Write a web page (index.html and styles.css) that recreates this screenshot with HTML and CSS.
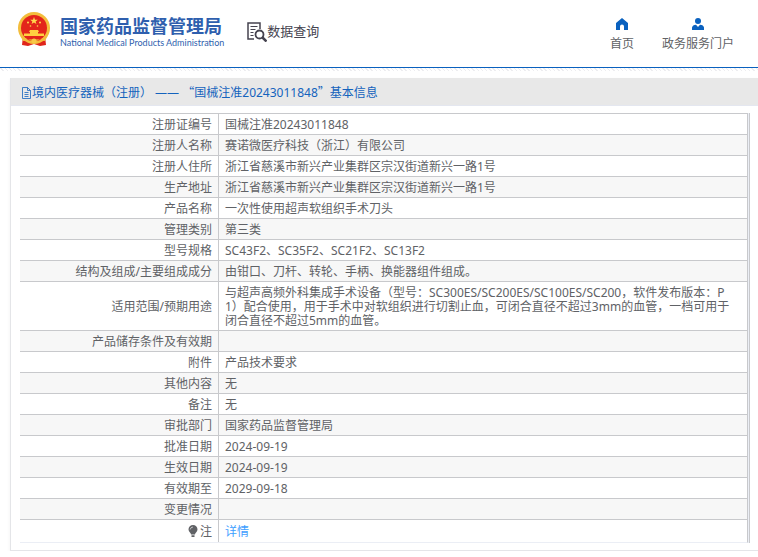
FILE: index.html
```html
<!DOCTYPE html>
<html lang="zh-CN">
<head>
<meta charset="utf-8">
<title>国家药品监督管理局 数据查询</title>
<link rel="stylesheet" href="styles.css">
</head>
<body>
<header class="top">
  <a class="brand" href="#">
    <svg class="emblem" viewBox="0 0 32 35" aria-hidden="true">
      <path d="M5 24h22l1 9-6 1-6-2-6 2-6-1z" fill="#e0251b"/>
      <circle cx="16" cy="16" r="16" fill="#f3bd3c"/>
      <circle cx="16" cy="16" r="13" fill="#e3241b"/>
      <path d="M16 5l1 2.700h2.800l-2.200 1.700.8 2.700-2.400-1.600-2.400 1.600.8-2.700-2.200-1.700H15z" fill="#ffd84d"/>
      <g fill="#ffd84d"><circle cx="10" cy="10.500" r="1"/><circle cx="22" cy="10.500" r="1"/><circle cx="12.500" cy="14" r=".8"/><circle cx="19.500" cy="14" r=".8"/></g>
      <path d="M12 18h8l1 2h-1v1.500h6v2.500H6v-2.500h6V20h-1z" fill="#ffd040"/>
      <path d="M3 25q13 5 26 0l-2 4q-6-1-7 2-4-2-8 0-1-3-7-2z" fill="#f3bd3c"/>
      <path d="M8 26.500q8 3 16 0l-3 2q-5-1-10 0z" fill="#dd2018"/>
      <circle cx="16" cy="29" r="2.500" fill="#f7c947"/>
    </svg>
    <span class="brand-text">
      <strong class="brand-cn">国家药品监督管理局</strong>
      <span class="brand-en">National Medical Products Administration</span>
    </span>
  </a>
  <a class="query" href="#">
    <svg class="query-icon" viewBox="0 0 20 20" fill="none" stroke="#45434f" aria-hidden="true">
      <path d="M7 17H1V1h12v6" stroke-width="1.500"/>
      <path d="M3.500 4.500h7M3.500 7.500h5M3.500 10.500h3M3.500 13.500h3" stroke-width="1.200"/>
      <circle cx="12.500" cy="12.500" r="4" stroke-width="1.800"/>
      <path d="M15.500 15.500l4 4" stroke-width="2.500"/>
    </svg>
    <span>数据查询</span>
  </a>
  <nav class="nav">
    <a href="#">
      <svg viewBox="0 0 12 12" aria-hidden="true"><path d="M6 0l6 5v7H8V8.500a2 2 0 0 0-4 0V12H0V5z" fill="#0a61bf"/></svg>
      <span>首页</span>
    </a>
    <a href="#">
      <svg viewBox="0 0 12 12" aria-hidden="true"><circle cx="6" cy="3" r="3" fill="#0a61bf"/><path d="M0 12V9.500Q.5 7 4 6.700L6 9l2-2.300q3.500.3 4 2.800V12z" fill="#0a61bf"/></svg>
      <span>政务服务门户</span>
    </a>
  </nav>
</header>
<div class="stripe"></div>
<main class="card">
  <h1 class="card-title">
    <svg class="doc" viewBox="0 0 11 12" fill="none" stroke="#1463bd" stroke-width=".8" aria-hidden="true"><path d="M1.500.5h5l3 3v8h-8zM6.500.5v3h3M3.500 5.500h4M3.500 7.500h4M3.500 9.500h4"/></svg>
    <span>境内医疗器械（注册） —— <span class="wide">“</span>国械注准20243011848<span class="wide">”</span>基本信息</span>
  </h1>
  <div class="frame">
    <table class="info">
      <tbody>
        <tr><th scope="row">注册证编号</th><td>国械注准20243011848</td></tr>
        <tr><th scope="row">注册人名称</th><td>赛诺微医疗科技（浙江）有限公司</td></tr>
        <tr><th scope="row">注册人住所</th><td>浙江省慈溪市新兴产业集群区宗汉街道新兴一路1号</td></tr>
        <tr><th scope="row">生产地址</th><td>浙江省慈溪市新兴产业集群区宗汉街道新兴一路1号</td></tr>
        <tr><th scope="row">产品名称</th><td>一次性使用超声软组织手术刀头</td></tr>
        <tr><th scope="row">管理类别</th><td>第三类</td></tr>
        <tr><th scope="row">型号规格</th><td>SC43F2、SC35F2、SC21F2、SC13F2</td></tr>
        <tr><th scope="row">结构及组成/主要组成成分</th><td>由钳口、刀杆、转轮、手柄、换能器组件组成。</td></tr>
        <tr><th scope="row">适用范围/预期用途</th><td>与超声高频外科集成手术设备（型号：SC300ES/SC200ES/SC100ES/SC200，软件发布版本：P1）配合使用，用于手术中对软组织进行切割止血，可闭合直径不超过3mm的血管，一档可用于闭合直径不超过5mm的血管。</td></tr>
        <tr><th scope="row">产品储存条件及有效期</th><td></td></tr>
        <tr><th scope="row">附件</th><td>产品技术要求</td></tr>
        <tr><th scope="row">其他内容</th><td>无</td></tr>
        <tr><th scope="row">备注</th><td>无</td></tr>
        <tr><th scope="row">审批部门</th><td>国家药品监督管理局</td></tr>
        <tr><th scope="row">批准日期</th><td>2024-09-19</td></tr>
        <tr><th scope="row">生效日期</th><td>2024-09-19</td></tr>
        <tr><th scope="row">有效期至</th><td>2029-09-18</td></tr>
        <tr><th scope="row">变更情况</th><td></td></tr>
        <tr class="note"><th scope="row"><svg class="bulb" viewBox="0 0 10 12" aria-hidden="true"><path d="M5 0a4.500 4.500 0 0 1 4.500 4.500C9.500 7 7 7.500 7 9.500H3C3 7.500.5 7 .5 4.500A4.500 4.500 0 0 1 5 0zM3.500 10.300h3V12h-3z" fill="#606266"/><path d="M2.200 4.500Q2.500 2.200 5 2" stroke="#fff" stroke-width=".6" fill="none"/></svg>注</th><td><a class="detail" href="#">详情</a></td></tr>
      </tbody>
    </table>
  </div>
</main>
</body>
</html>
```
FILE: styles.css
```css
* {
  box-sizing: border-box;
}

body {
  margin: 0;
  background: #fff;
  color: #606266;
  font: 12px/14px "Noto Sans", "Noto Sans CJK SC", sans-serif;
  overflow-x: hidden;
}

a {
  color: inherit;
  text-decoration: none;
}

svg {
  display: block;
}

.top {
  display: flex;
  align-items: flex-start;
  height: 68px;
  padding: 12px 24px 0 18px;
  border-bottom: 1px solid #0a61bf;
}

.brand {
  display: flex;
  gap: 10px;
  color: #2f5fae;
}

.emblem {
  width: 32px;
  height: 35px;
}

.brand-text {
  display: flex;
  flex-direction: column;
  padding-top: 4px;
  white-space: nowrap;
}

.brand-cn {
  font-size: 18px;
  line-height: 20px;
}

.brand-en {
  font: 400 9px/14px Lato, sans-serif;
}

.query {
  display: flex;
  margin-left: 23px;
  padding-top: 10px;
  color: #45434f;
  font-size: 13px;
  line-height: 18px;
}

.query-icon {
  width: 20px;
  height: 20px;
}

.nav {
  display: flex;
  gap: 28px;
  margin-left: auto;
  padding-top: 6px;
}

.nav a {
  display: flex;
  flex-direction: column;
  align-items: center;
  gap: 7px;
}

.nav svg {
  width: 12px;
  height: 12px;
}

.stripe {
  height: 3px;
  background: repeating-linear-gradient(45deg, #fff 0 2px, #ededf0 2px 3px);
}

.card {
  margin: 7px 0 0 10px;
  padding-bottom: 7px;
  border: 1px solid #e4e5e8;
  border-width: 0 0 1px 1px;
  box-shadow: 0 2px 4px #0000000d;
}

.card-title {
  display: flex;
  align-items: center;
  height: 28px;
  margin: 0 0 7px;
  padding: 2px 0 0 10px;
  background: #e8e8e8;
  border-bottom: 1px solid #e4e7f0;
  color: #1463bd;
  font-size: 12px;
  font-weight: 400;
}

.wide {
  font-family: "Noto Sans CJK SC", sans-serif;
}

.doc {
  width: 11px;
  height: 12px;
}

.frame {
  margin: 0 8px 0 9px;
  padding-right: 1px;
  background: #ebeef5;
  border-right: 1px solid #c8c9cc;
}

.info {
  width: 100%;
  background: #fff;
  border-collapse: separate;
  border-spacing: 0;
  border-right: 1px solid #c8c9cc;
  border-bottom: 1px solid #ebeef5;
}

.info th,
.info td {
  height: 21px;
  padding: 4px 6px 2px;
  border-top: 1px solid #c8c9cc;
  font-weight: 400;
  text-align: left;
  vertical-align: middle;
}

.info th {
  width: 199px;
  border-right: 1px solid #c8c9cc;
  text-align: right;
}

.info td {
  padding-right: 13px;
  word-break: break-all;
}

.info tr:nth-child(even) {
  background: #f7f7f7;
}

.info .note th,
.info .note td {
  height: 23px;
}

.bulb {
  display: inline-block;
  width: 10px;
  height: 12px;
  margin-right: 2px;
  vertical-align: -1px;
}

.detail {
  color: #409eff;
}
```
